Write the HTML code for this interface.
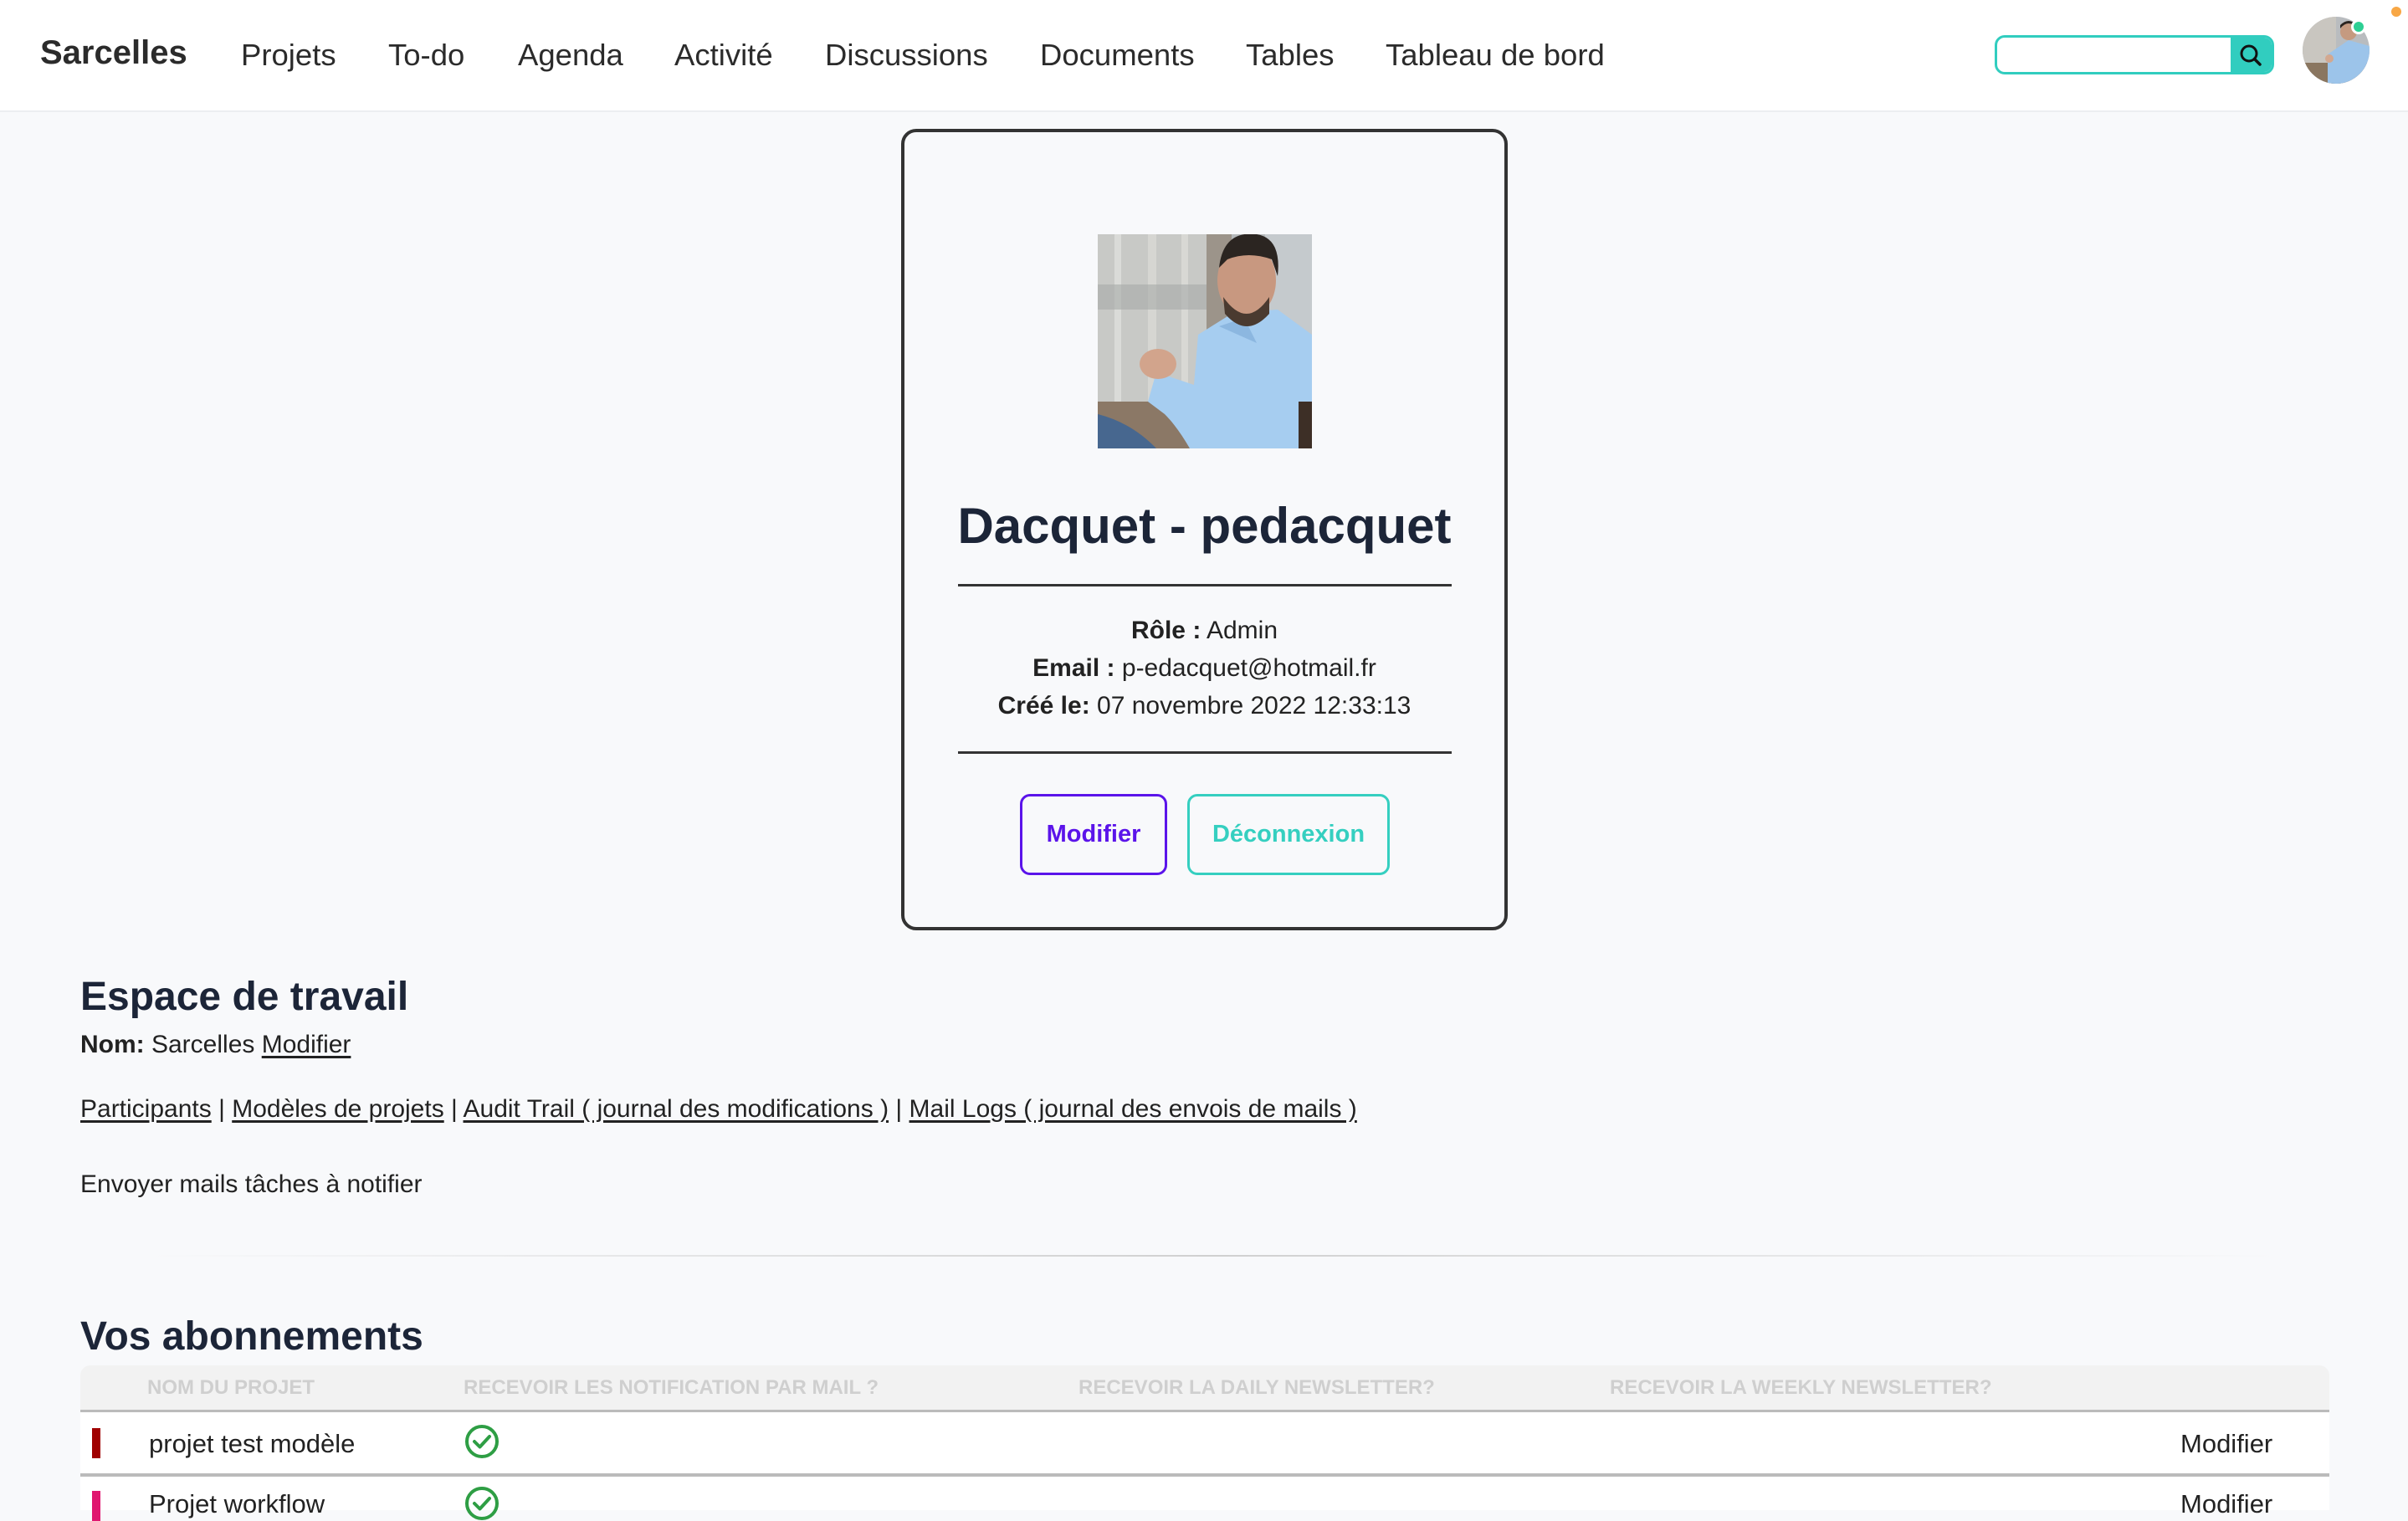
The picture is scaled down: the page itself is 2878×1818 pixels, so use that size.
<!DOCTYPE html>
<html><head><meta charset="utf-8"><style>
*{box-sizing:border-box;margin:0;padding:0}
body{width:2878px;height:1798px;overflow:hidden;background:#f8f9fb;font-family:"Liberation Sans",Arial,sans-serif;color:#222;position:relative}
.nav{position:absolute;left:0;top:0;width:2878px;height:134px;background:#fff;border-bottom:2px solid #eceef1}
.nav span{position:absolute;top:45px;font-size:36.5px;color:#2b2b2b;white-space:nowrap}
.brand{font-weight:bold;font-size:40px!important;top:41px!important}
.search{position:absolute;left:2384px;top:42px;width:334px;height:47px;border:3px solid #31cdbf;border-radius:12px;background:#fff;overflow:hidden}
.search .b{position:absolute;right:0;top:0;width:49px;height:100%;background:#31cdbf}
.card{position:absolute;left:1077px;top:154px;width:725px;height:958px;border:4px solid #333;border-radius:18px;background:#f8f9fb}
.abs{position:absolute}
.name{position:absolute;left:1077px;width:725px;top:594px;text-align:center;font-size:60px;font-weight:bold;color:#1c2538;white-space:nowrap}
.hr{position:absolute;left:1145px;width:590px;height:3px;background:#333}
.info{position:absolute;left:1077px;width:725px;text-align:center;font-size:30px;color:#222}
.btn{position:absolute;top:949px;height:97px;border-radius:12px;border:3px solid;font-size:29px;font-weight:bold;text-align:center;line-height:91px}
h2{position:absolute;left:96px;font-size:48px;font-weight:bold;color:#1c2538}
.t{position:absolute;left:96px;font-size:30px;color:#222;white-space:nowrap}
.t u{text-underline-offset:4px}
.th{position:absolute;top:1645px;font-size:24px;font-weight:bold;color:#cfcfcf;white-space:nowrap}
</style></head><body>
<div class="nav">
<span class="brand" style="left:48px">Sarcelles</span>
<span style="left:288px">Projets</span>
<span style="left:464px">To-do</span>
<span style="left:619px">Agenda</span>
<span style="left:806px">Activité</span>
<span style="left:986px">Discussions</span>
<span style="left:1243px">Documents</span>
<span style="left:1489px">Tables</span>
<span style="left:1656px">Tableau de bord</span>
<div class="search"><div class="b"><svg width="49" height="41" viewBox="0 0 49 41"><circle cx="22" cy="19" r="9" fill="none" stroke="#111" stroke-width="3"/><line x1="28.5" y1="25.5" x2="35" y2="32" stroke="#111" stroke-width="3.5" stroke-linecap="round"/></svg></div></div>
<svg class="abs" style="left:2752px;top:20px" width="80" height="80" viewBox="0 0 80 80"><defs><clipPath id="c"><circle cx="40" cy="40" r="40"/></clipPath></defs><g clip-path="url(#c)"><rect width="80" height="80" fill="#b9bcbf"/><rect x="0" y="0" width="40" height="80" fill="#c9c6c0"/><rect x="0" y="55" width="80" height="25" fill="#8a7660"/><path d="M30 45 L55 28 L80 35 L80 80 L30 80 Z" fill="#9cc4ea"/><circle cx="55" cy="18" r="10" fill="#c59a80"/><path d="M45 14 Q55 2 65 14 L65 10 Q55 0 45 10Z" fill="#2a2420"/><circle cx="32" cy="50" r="5" fill="#d3a890"/></g></svg>
<div class="abs" style="left:2810px;top:23px;width:18px;height:18px;border-radius:50%;background:#2ecf94;border:3px solid #fff"></div>
<div class="abs" style="left:2858px;top:8px;width:12px;height:12px;border-radius:50%;background:#f8a745"></div>
</div>

<div class="card"></div>
<div class="name">Dacquet - pedacquet</div>
<svg class="abs" style="left:1312px;top:280px" width="256" height="256" viewBox="0 0 256 256">
<rect width="256" height="256" fill="#b5b9bb"/>
<rect x="0" y="0" width="130" height="200" fill="#c8c9c6"/>
<rect x="20" y="0" width="8" height="210" fill="#dadbd8"/><rect x="60" y="0" width="10" height="210" fill="#d6d6d2"/><rect x="100" y="0" width="8" height="210" fill="#d8d8d4"/>
<rect x="0" y="60" width="256" height="30" fill="#a7aaa8" opacity=".6"/>
<rect x="130" y="0" width="30" height="220" fill="#9c948a"/>
<rect x="200" y="0" width="56" height="120" fill="#c5cacd"/>
<rect x="0" y="200" width="256" height="56" fill="#8b7866"/>
<path d="M0 215 Q40 225 70 256 L0 256Z" fill="#47678f"/>
<path d="M120 120 L160 95 L215 90 L256 120 L256 256 L110 256 Q95 230 80 215 L60 200 L70 165 L115 180 Z" fill="#a6cdf0"/>
<path d="M145 110 L175 100 L190 130 Z" fill="#8cb7e0"/>
<ellipse cx="178" cy="55" rx="35" ry="45" fill="#c89880"/>
<path d="M145 40 Q150 -5 190 0 Q220 5 215 50 L208 30 Q180 20 155 30Z" fill="#2b2521"/>
<path d="M150 75 Q178 115 205 75 L205 95 Q178 125 152 95Z" fill="#4a3a30"/>
<ellipse cx="72" cy="155" rx="22" ry="18" fill="#d2a48c"/>
<rect x="240" y="200" width="16" height="56" fill="#3d2f26"/>
</svg>
<div class="hr" style="top:698px"></div>
<div class="info" style="top:737px"><b>Rôle :</b> Admin</div>
<div class="info" style="top:782px"><b>Email :</b> p-edacquet@hotmail.fr</div>
<div class="info" style="top:827px"><b>Créé le:</b> 07 novembre 2022 12:33:13</div>
<div class="hr" style="top:898px"></div>
<div class="btn" style="left:1219px;width:176px;border-color:#5b14ea;color:#5b14ea">Modifier</div>
<div class="btn" style="left:1419px;width:242px;border-color:#35cfc0;color:#35cfc0">Déconnexion</div>

<h2 style="top:1164px">Espace de travail</h2>
<div class="t" style="top:1232px"><b>Nom:</b> Sarcelles <u>Modifier</u></div>
<div class="t" style="top:1309px"><u>Participants</u> | <u>Modèles de projets</u> | <u>Audit Trail ( journal des modifications )</u> | <u>Mail Logs ( journal des envois de mails )</u></div>
<div class="t" style="top:1399px">Envoyer mails tâches à notifier</div>
<div class="abs" style="left:180px;top:1500px;width:2540px;height:2px;background:linear-gradient(90deg,rgba(200,200,200,0),#d0d0d0 50%,rgba(200,200,200,0))"></div>
<h2 style="top:1570px">Vos abonnements</h2>
<div class="abs" style="left:96px;top:1632px;width:2688px;height:56px;background:#f2f2f2;border-radius:12px 12px 0 0;border-bottom:3px solid #bbb"></div>
<div class="th" style="left:176px">NOM DU PROJET</div>
<div class="th" style="left:554px">RECEVOIR LES NOTIFICATION PAR MAIL ?</div>
<div class="th" style="left:1289px">RECEVOIR LA DAILY NEWSLETTER?</div>
<div class="th" style="left:1924px">RECEVOIR LA WEEKLY NEWSLETTER?</div>
<div class="abs" style="left:96px;top:1688px;width:2688px;height:77px;background:#fff;border-bottom:4px solid #bbb"></div>
<div class="abs" style="left:96px;top:1765px;width:2688px;height:40px;background:#fff"></div>
<div class="abs" style="left:110px;top:1707px;width:10px;height:36px;background:#a00000"></div>
<div class="abs" style="left:110px;top:1782px;width:10px;height:36px;background:#e0166f"></div>
<div class="t" style="left:178px;top:1708px;font-size:31px">projet test modèle</div>
<div class="t" style="left:178px;top:1780px;font-size:31px">Projet workflow</div>
<div class="t" style="left:2606px;top:1708px;font-size:31px">Modifier</div>
<div class="t" style="left:2606px;top:1780px;font-size:31px">Modifier</div>
<svg class="abs" style="left:555px;top:1702px" width="42" height="42" viewBox="0 0 42 42"><circle cx="21" cy="21" r="18" fill="none" stroke="#2e9e44" stroke-width="4"/><path d="M12 21 L18.5 27.5 L30 15" fill="none" stroke="#2e9e44" stroke-width="4" stroke-linecap="round" stroke-linejoin="round"/></svg>
<svg class="abs" style="left:555px;top:1776px" width="42" height="42" viewBox="0 0 42 42"><circle cx="21" cy="21" r="18" fill="none" stroke="#2e9e44" stroke-width="4"/><path d="M12 21 L18.5 27.5 L30 15" fill="none" stroke="#2e9e44" stroke-width="4" stroke-linecap="round" stroke-linejoin="round"/></svg>
</body></html>
